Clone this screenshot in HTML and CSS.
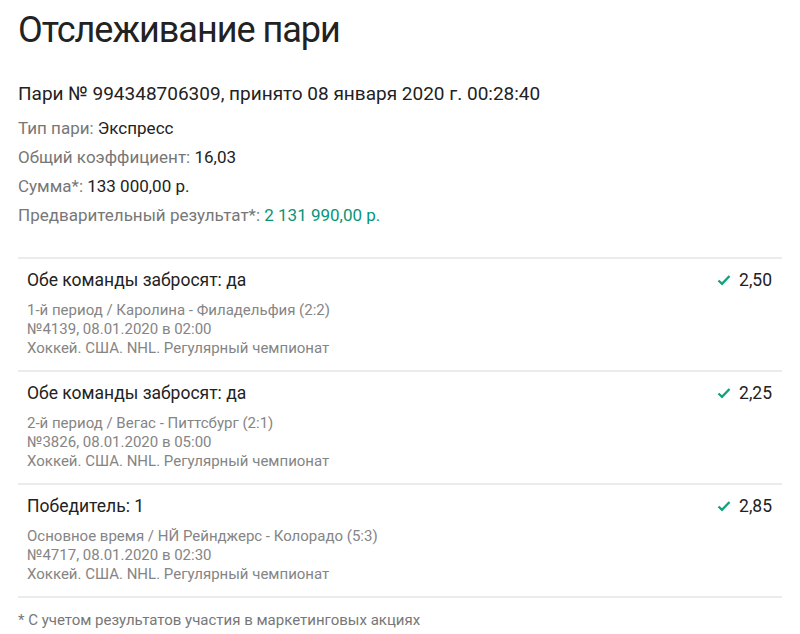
FILE: index.html
```html
<!DOCTYPE html>
<html lang="ru">
<head>
    <meta charset="UTF-8">
    <title>Отслеживание пари</title>
    <link rel="stylesheet" href="styles.css">
</head>
<body>

<h1>Отслеживание пари</h1>
<div class="bet-head">Пари № 994348706309, принято 08 января 2020 г. 00:28:40</div>
<div class="info">
    <div class="info-row"><span class="label">Тип пари:</span> Экспресс</div>
    <div class="info-row"><span class="label">Общий коэффициент:</span> 16,03</div>
    <div class="info-row"><span class="label">Сумма*:</span> 133 000,00 р.</div>
    <div class="info-row"><span class="label">Предварительный результат*:</span> <span class="win">2 131 990,00 р.</span></div>
</div>

<div class="events">
    <div class="event">
        <div class="event-main">
            <div class="event-title">Обе команды забросят: да</div>
            <div class="event-details">
                1-й период / Каролина - Филадельфия (2:2)<br>
                №4139, 08.01.2020 в 02:00<br>
                Хоккей. США. NHL. Регулярный чемпионат
            </div>
        </div>
        <div class="odds">
            <svg class="check" width="14" height="12" viewBox="0 0 14 12"><path d="M1.5 6.5 L5 9.8 L12.5 2" fill="none" stroke="#10a27a" stroke-width="2.3"/></svg>
            2,50
        </div>
    </div>
    <div class="event">
        <div class="event-main">
            <div class="event-title">Обе команды забросят: да</div>
            <div class="event-details">
                2-й период / Вегас - Питтсбург (2:1)<br>
                №3826, 08.01.2020 в 05:00<br>
                Хоккей. США. NHL. Регулярный чемпионат
            </div>
        </div>
        <div class="odds">
            <svg class="check" width="14" height="12" viewBox="0 0 14 12"><path d="M1.5 6.5 L5 9.8 L12.5 2" fill="none" stroke="#10a27a" stroke-width="2.3"/></svg>
            2,25
        </div>
    </div>
    <div class="event">
        <div class="event-main">
            <div class="event-title">Победитель: 1</div>
            <div class="event-details">
                Основное время / НЙ Рейнджерс - Колорадо (5:3)<br>
                №4717, 08.01.2020 в 02:30<br>
                Хоккей. США. NHL. Регулярный чемпионат
            </div>
        </div>
        <div class="odds">
            <svg class="check" width="14" height="12" viewBox="0 0 14 12"><path d="M1.5 6.5 L5 9.8 L12.5 2" fill="none" stroke="#10a27a" stroke-width="2.3"/></svg>
            2,85
        </div>
    </div>
</div>

<div class="note">* С учетом результатов участия в маркетинговых акциях</div>

</body>
</html>
```

FILE: styles.css
```css
body {
    font-family: Roboto, "Noto Sans", sans-serif;
    margin: 0;
    padding: 0 18px;
    background-color: #fff;
    color: #222;
}
h1 {
    font-size: 36px;
    font-weight: 400;
    letter-spacing: -1px;
    margin: 8px 0 0;
    line-height: 44px;
}
.bet-head {
    font-size: 19px;
    margin-top: 30px;
    line-height: 24px;
}
.info {
    margin-top: 8px;
}
.info-row {
    font-size: 17px;
    line-height: 29px;
}
.label {
    color: #777;
}
.win {
    color: #089479;
}
.events {
    margin-top: 27px;
    border-top: 2px solid #ebebeb;
}
.event {
    display: flex;
    justify-content: space-between;
    padding: 10px 10px 12px 9px;
    border-bottom: 2px solid #ebebeb;
}
.event-title {
    font-size: 17.5px;
    line-height: 22px;
}
.event-details {
    margin-top: 10px;
    font-size: 15px;
    line-height: 19px;
    color: #858585;
}
.odds {
    font-size: 17.5px;
    line-height: 22px;
    display: flex;
    align-items: center;
    gap: 8px;
    align-self: flex-start;
}
.note {
    font-size: 15px;
    line-height: 20px;
    color: #777;
    margin-top: 12px;
}
```
